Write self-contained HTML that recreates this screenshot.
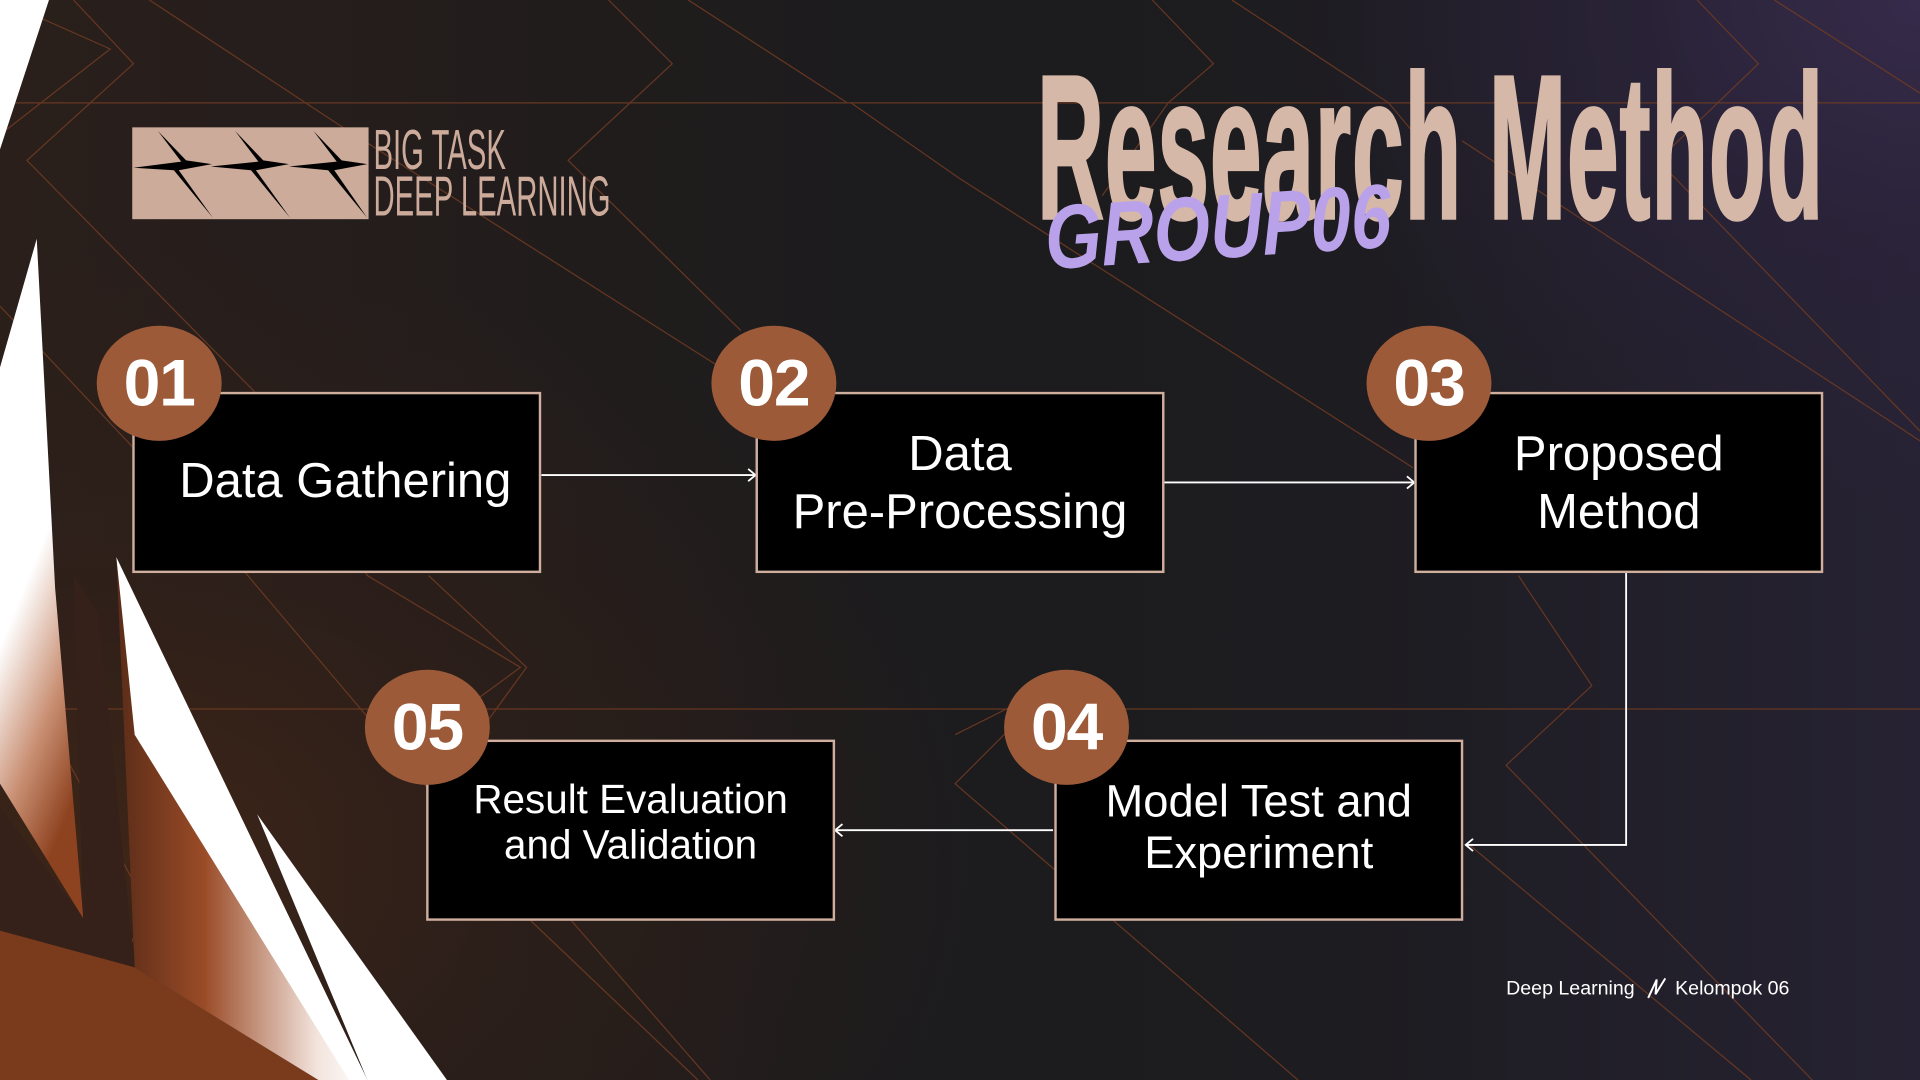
<!DOCTYPE html>
<html><head><meta charset="utf-8"><style>
html,body{margin:0;padding:0;width:1920px;height:1080px;overflow:hidden;background:#1c1b1d;}
#s{position:absolute;left:0;top:0;width:1568px;height:882px;transform:scale(1.22449);transform-origin:0 0;overflow:hidden;
background:
radial-gradient(ellipse 520px 420px at 1568px 0px,#362b4a 0%,rgba(45,36,62,.6) 45%,rgba(28,27,29,0) 100%),
radial-gradient(ellipse 700px 500px at 100px 700px,#3d2518 0%,rgba(50,32,24,.6) 45%,rgba(28,27,29,0) 100%),
linear-gradient(90deg,#2a1f1b 0%,#1c1b1d 45%,#1d1c20 70%,#262233 100%);
font-family:"Liberation Sans",Arial,sans-serif;}
.abs{position:absolute;}
.box{position:absolute;background:#000;border:2px solid #cfae9e;box-sizing:border-box;color:#fff;display:flex;align-items:center;justify-content:center;text-align:center;line-height:1.18;white-space:nowrap;}
.c{position:absolute;width:102px;height:94px;border-radius:50%;background:#9c5a39;color:#fff;font-weight:bold;font-size:54px;display:flex;align-items:center;justify-content:center;letter-spacing:-1px;}
</style></head><body><div id="s">
<svg class="abs" style="left:0;top:0" width="1568" height="882" viewBox="0 0 1568 882">
<defs>
<linearGradient id="gA" x1="0" y1="0" x2="0.3" y2="1"><stop offset="0" stop-color="#fff"/><stop offset=".55" stop-color="#fff"/><stop offset=".8" stop-color="#c98f73"/><stop offset="1" stop-color="#8e4320"/></linearGradient>
<linearGradient id="gB" x1="0" y1="0" x2="1" y2="0"><stop offset="0" stop-color="#5a2c18"/><stop offset=".35" stop-color="#9a4b27"/><stop offset=".8" stop-color="#f3e4dd"/><stop offset="1" stop-color="#fff"/></linearGradient>
</defs>
<g stroke="#6e3a22" stroke-width="1" fill="none" opacity=".9">
<line x1="0" y1="84" x2="1568" y2="84"/>
<line x1="0" y1="579" x2="1568" y2="579"/>
<polyline points="60,0 109,52 22,131 207,319 300,470 425,545 350,600"/>
<polyline points="122,0 280,104 585,298 620,330"/>
<polyline points="497,0 549,52 464,131 605,270"/>
<polyline points="562,0 692,84"/>
<polyline points="695,84 784,146 1154,382"/>
<polyline points="941,0 991,52 954,84 900,160"/>
<polyline points="1006,0 1134,84 1160,115"/>
<polyline points="1386,0 1436,52 1354,131 1568,352"/>
<polyline points="1449,0 1568,76"/>
<polyline points="1194,115 1568,360"/>
<polyline points="0,0 90,40 0,110"/>
<polyline points="0,250 160,420 380,680"/>
<polyline points="350,470 430,545 390,600"/>
<polyline points="400,720 570,882"/>
<polyline points="465,750 580,882"/>
<polyline points="780,600 860,560 780,640 1060,882"/>
<polyline points="1240,470 1300,560 1230,625 1480,882"/>
<polyline points="1200,690 1430,882"/>
<polyline points="0,520 120,740 60,882"/>
</g>
<polygon points="0,0 40,0 0,122" fill="#fff"/>
<polygon points="0,300 30,195 45,480 68,750 0,640" fill="url(#gA)"/>
<polygon points="0,660 68,750 60,470 80,500 110,790 0,760" fill="#35201a"/>
<polygon points="0,760 110,790 260,882 0,882" fill="#7a3b1d"/>
<polygon points="110,790 95,455 300,882 260,882" fill="url(#gB)"/>
<polygon points="95,455 300,882 285,882 110,600" fill="#fff"/>
<polygon points="210,665 365,882 300,882" fill="#fff"/>
<g stroke="#fff" stroke-width="1.5" fill="none">
<line x1="442" y1="388" x2="617" y2="388"/><polyline points="611,383 617,388 611,393"/>
<line x1="951" y1="394" x2="1155" y2="394"/><polyline points="1149,389 1155,394 1149,399"/>
<polyline points="1328,468 1328,690 1197,690"/><polyline points="1203,685 1197,690 1203,695"/>
<line x1="860" y1="678" x2="682" y2="678"/><polyline points="688,673 682,678 688,683"/>
</g>
<rect x="108" y="104" width="193" height="75" fill="#cdab9b"/>
<g fill="#000">
<polygon points="129,107 152,131 173,134 146,139 174,178 142,139 109,137 148,132"/>
<polygon points="192,107 215,131 236,134 209,139 237,178 205,139 172,136 211,132"/>
<polygon points="256,107 279,131 300,134 273,139 300,178 268,139 236,136 275,132"/>
</g>
<polyline points="1346,815 1353,800 1352,812 1360,799" stroke="#fff" stroke-width="1.6" fill="none"/>
</svg>
<div class="abs" style="left:305px;top:103px;color:#cdab9b;font-size:46px;line-height:38px;transform:scaleX(.52);transform-origin:0 0;white-space:nowrap;">BIG TASK<br>DEEP LEARNING</div>
<div class="abs" style="left:847px;top:30px;color:#d6b8a8;font-weight:bold;font-size:167px;line-height:183px;transform:scaleX(.452);transform-origin:0 0;white-space:nowrap;letter-spacing:2px;-webkit-text-stroke:3px #d6b8a8;">Research Method</div>
<div class="abs" style="left:852px;top:160px;color:#b9a2e9;font-weight:bold;font-style:italic;font-size:74px;line-height:70px;transform:scaleX(.8) rotate(-3deg);transform-origin:0 0;white-space:nowrap;">GROUP06</div>

<div class="box" style="left:108px;top:320px;width:334px;height:148px;font-size:40px;padding-left:14px;">Data Gathering</div>
<div class="box" style="left:617px;top:320px;width:334px;height:148px;font-size:40px;padding-top:2px;">Data<br>Pre-Processing</div>
<div class="box" style="left:1155px;top:320px;width:334px;height:148px;font-size:40px;padding-top:2px;">Proposed<br>Method</div>
<div class="box" style="left:348px;top:604px;width:334px;height:148px;font-size:33px;line-height:37px;align-items:flex-start;padding-top:28px;">Result Evaluation<br>and Validation</div>
<div class="box" style="left:861px;top:604px;width:334px;height:148px;font-size:37px;line-height:42px;align-items:flex-start;padding-top:28px;">Model Test and<br>Experiment</div>

<div class="c" style="left:79px;top:266px;">01</div>
<div class="c" style="left:581px;top:266px;">02</div>
<div class="c" style="left:1116px;top:266px;">03</div>
<div class="c" style="left:298px;top:547px;">05</div>
<div class="c" style="left:820px;top:547px;">04</div>

<div class="abs" style="left:1230px;top:799px;color:#fff;font-size:16px;white-space:nowrap;">Deep Learning</div>
<div class="abs" style="left:1368px;top:799px;color:#fff;font-size:16px;white-space:nowrap;">Kelompok 06</div>
</div></body></html>
